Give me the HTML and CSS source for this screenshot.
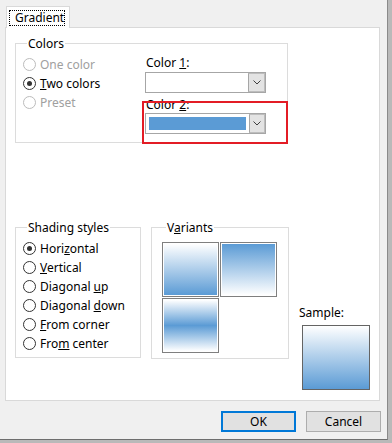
FILE: index.html
```html
<!DOCTYPE html>
<html lang="en">
<head>
  <meta charset="UTF-8">
  <title>Fill Effects</title>
  <link rel="stylesheet" href="styles.css">
</head>
<body>
  <div class="dialog">
    <div class="tabs">
      <div class="tab"><span class="tab-label">Gradient</span></div>
    </div>
    <div class="panel">
      <fieldset class="group colors">
        <legend>Colors</legend>
        <div class="color-mode">
          <div class="radio disabled"><span class="dot"></span><span>One color</span></div>
          <div class="radio checked"><span class="dot"></span><span><u>T</u>wo colors</span></div>
          <div class="radio disabled"><span class="dot"></span><span>Preset</span></div>
        </div>
        <div class="color-pickers">
          <div class="field-label">Color <u>1</u>:</div>
          <div class="combo">
            <span class="combo-value"></span>
            <span class="combo-btn">
              <svg width="8" height="5" viewBox="0 0 8 5"><polyline points="0.5,0.5 4,4 7.5,0.5" fill="none" stroke="#404040" stroke-width="1"/></svg>
            </span>
          </div>
          <div class="field-label second">Color <u>2</u>:</div>
          <div class="combo">
            <span class="combo-value"><span class="combo-fill"></span></span>
            <span class="combo-btn">
              <svg width="8" height="5" viewBox="0 0 8 5"><polyline points="0.5,0.5 4,4 7.5,0.5" fill="none" stroke="#404040" stroke-width="1"/></svg>
            </span>
          </div>
        </div>
      </fieldset>

      <div class="lower">
        <fieldset class="group shading">
          <legend>Shading styles</legend>
          <div class="radio checked"><span class="dot"></span><span>Hori<u>z</u>ontal</span></div>
          <div class="radio"><span class="dot"></span><span><u>V</u>ertical</span></div>
          <div class="radio"><span class="dot"></span><span>Diagonal <u>u</u>p</span></div>
          <div class="radio"><span class="dot"></span><span>Diagonal <u>d</u>own</span></div>
          <div class="radio"><span class="dot"></span><span><u>F</u>rom corner</span></div>
          <div class="radio"><span class="dot"></span><span>Fro<u>m</u> center</span></div>
        </fieldset>

        <fieldset class="group variants">
          <legend>V<u>a</u>riants</legend>
          <div class="variant-grid">
            <div class="variant"><div class="grad down"></div></div>
            <div class="variant"><div class="grad up"></div></div>
            <div class="variant"><div class="grad middle"></div></div>
          </div>
        </fieldset>

        <div class="sample">
          <div class="sample-label">Sample:</div>
          <div class="sample-box"></div>
        </div>
      </div>
    </div>

    <div class="buttons">
      <button class="btn default">OK</button>
      <button class="btn">Cancel</button>
    </div>

    <!-- annotation box round the Color 2 picker -->
    <div class="highlight"></div>
  </div>
</body>
</html>
```

FILE: styles.css
```css
body {
  margin: 0;
  padding: 0;
  width: 392px;
  height: 443px;
  overflow: hidden;
  background: #b9b9b9;
  font-family: 'Noto Sans', 'Open Sans', Arial, sans-serif;
  font-size: 12px;
  color: #000;
}
.dialog {
  position: relative;
  width: 388px;
  height: 440px;
  box-sizing: border-box;
  background: #f0f0f0;
  border-right: 1px solid #8a8a8a;
  border-bottom: 1px solid #6e6e6e;
}
/* tab strip */
.tabs {
  display: flex;
  padding: 6px 0 0 6px;
}
.tab {
  position: relative;
  z-index: 1;
  box-sizing: border-box;
  width: 64px;
  height: 22px;
  margin-bottom: -1px;
  padding: 3px 0 0 2px;
  background: #fff;
  border: 1px solid #d9d9d9;
  border-bottom: 0;
}
.tab-label {
  display: block;
  width: 56px;
  box-sizing: border-box;
  border: 1px dotted #000;
  padding-left: 5px;
  line-height: 14px;
}
.panel {
  box-sizing: border-box;
  width: 375px;
  height: 374px;
  margin-left: 5px;
  padding: 8px 0 0 9px;
  background: #fff;
  border: 1px solid #d9d9d9;
}
/* group boxes */
.group {
  margin: 0;
  padding: 0;
  min-width: 0;
  box-sizing: border-box;
  border: 1px solid #dcdcdc;
}
.group legend {
  padding: 0 1px;
  margin-left: 4px;
  line-height: 15px;
}
.colors {
  width: 273px;
  height: 107px;
  display: flex;
  padding: 4px 0 0 7px;
}
.color-mode {
  width: 122px;
}
.radio {
  display: flex;
  align-items: center;
  height: 19px;
  gap: 4px;
  white-space: nowrap;
}
.dot {
  width: 13px;
  height: 13px;
  box-sizing: border-box;
  border: 1px solid #333;
  border-radius: 50%;
  display: flex;
  align-items: center;
  justify-content: center;
  flex: none;
}
.radio.checked .dot::after {
  content: '';
  width: 5px;
  height: 5px;
  border-radius: 50%;
  background: #333;
}
.radio.disabled {
  color: #a0a0a0;
}
.radio.disabled .dot {
  border-color: #bcbcbc;
}
.field-label {
  line-height: 15px;
  padding-left: 1px;
  margin-bottom: 2px;
}
.field-label.second {
  margin-top: 4px;
  margin-bottom: 1px;
}
.combo {
  display: flex;
  width: 121px;
  height: 21px;
  box-sizing: border-box;
  border: 1px solid #a6a6a6;
  background: #fff;
}
.combo-value {
  flex: 1;
  padding: 3px;
}
.combo-fill {
  display: block;
  width: 97px;
  height: 13px;
  background: #5b9bd5;
}
.combo-btn {
  width: 17px;
  box-sizing: border-box;
  display: flex;
  align-items: center;
  justify-content: center;
  background: #e3e3e3;
  border: 1px solid #bdbdbd;
  border-left-color: #a6a6a6;
}
/* lower row */
.lower {
  display: flex;
  align-items: flex-start;
  margin-top: 77px;
}
.shading {
  width: 126px;
  height: 138px;
  padding: 4px 0 0 7px;
}
.variants {
  width: 138px;
  height: 139px;
  margin-left: 10px;
  padding: 7px 0 0 10px;
}
.variants legend {
  margin-left: 4px;
}
.variant-grid {
  display: grid;
  grid-template-columns: 57px 57px;
  grid-auto-rows: 55px;
  gap: 1px;
}
.variant {
  box-sizing: border-box;
  border: 1px solid #7f7f7f;
  padding: 1px;
  background: #fff;
}
.grad {
  width: 100%;
  height: 100%;
}
.grad.down {
  background: linear-gradient(#fff, #5b9bd5);
}
.grad.up {
  background: linear-gradient(#5b9bd5, #fff);
}
.grad.middle {
  background: linear-gradient(#fff, #5b9bd5 50%, #fff);
}
.sample {
  margin: 85px 0 0 10px;
}
.sample-label {
  line-height: 15px;
  margin-bottom: 5px;
}
.sample-box {
  width: 68px;
  height: 65px;
  margin-left: 3px;
  box-sizing: border-box;
  border: 1px solid #646464;
  background: linear-gradient(#fff, #5b9bd5);
}
/* dialog buttons */
.buttons {
  display: flex;
  justify-content: flex-end;
  gap: 10px;
  padding: 10px 6px 0 0;
}
.btn {
  width: 75px;
  height: 21px;
  box-sizing: border-box;
  margin: 0;
  padding: 0;
  font: inherit;
  color: #000;
  background: #e1e1e1;
  border: 1px solid #adadad;
}
.btn.default {
  border: 2px solid #0078d7;
}
.highlight {
  position: absolute;
  left: 142px;
  top: 101px;
  width: 146px;
  height: 43px;
  box-sizing: border-box;
  border: 2px solid #e31c25;
}
```
